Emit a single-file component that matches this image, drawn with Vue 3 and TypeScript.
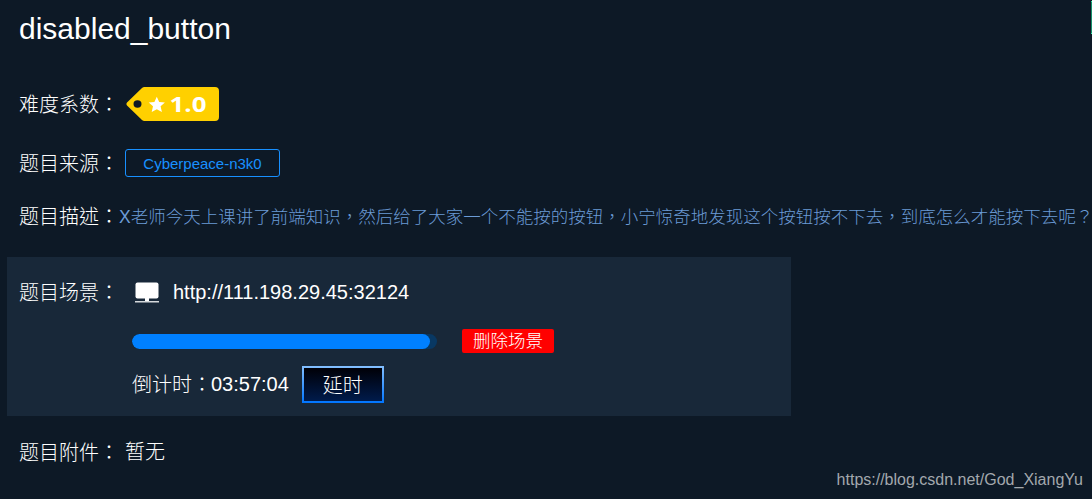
<template>
  <div class="page">
    <div class="side-edge"></div>
    <h1 class="title">disabled_button</h1>

    <div class="row difficulty">
      <span class="label">难度系数：</span>
      <svg class="tag" width="94" height="34" viewBox="0 0 94 34">
        <path fill="#ffd000" fill-rule="evenodd" d="M19.500 0H90Q94 0 94 4V30Q94 34 90 34H19.500Q18 34 17 33L2 18.500Q.6 17 2 15.500L17 1Q18 0 19.500 0ZM12.500 13.300a4 3.700 0 1 0 0 7.400a4 3.700 0 1 0 0-7.400Z" />
        <path fill="#fff" d="M31.800 9.700L34.200 15L39.900 15.600L35.600 19.300L36.900 25.100L31.800 22.200L26.700 25.100L28 19.300L23.700 15.600L29.400 15Z" />
        <text x="44.500" y="24.500" textLength="37" lengthAdjust="spacingAndGlyphs">{{ challenge.difficulty }}</text>
      </svg>
    </div>

    <div class="row source">
      <span class="label">题目来源：</span>
      <span class="source-tag">{{ challenge.source }}</span>
    </div>

    <div class="row description">
      <span class="label">题目描述：</span>
      <span class="description-text">{{ challenge.description }}</span>
    </div>

    <div class="scene">
      <div class="row scene-address">
        <span class="label">题目场景：</span>
        <svg class="monitor" width="24" height="21" viewBox="0 0 24 21">
          <rect x="0.500" y="0.500" width="23" height="16" rx="2" fill="#fff" />
          <path d="M10 16h4v3h-4z" fill="#fff" />
          <path d="M0 19h24v1.500H0z" fill="#d5d9dc" />
        </svg>
        <span class="url">{{ challenge.url }}</span>
      </div>
      <div class="row scene-progress">
        <div class="progress">
          <div class="progress-bar" :style="{ width: progress + '%' }"></div>
        </div>
        <button class="delete">删除场景</button>
      </div>
      <div class="row scene-time">
        <span class="label">倒计时：</span>
        <span class="countdown">{{ countdown }}</span>
        <button class="delay">延时</button>
      </div>
    </div>

    <div class="row attachment">
      <span class="label">题目附件：</span>
      <span class="attachment-value">暂无</span>
    </div>

    <div class="watermark">https://blog.csdn.net/God_XiangYu</div>
  </div>
</template>

<script setup lang="ts">
import { ref, computed } from 'vue';

const challenge = {
  difficulty: '1.0',
  source: 'Cyberpeace-n3k0',
  description: 'X老师今天上课讲了前端知识，然后给了大家一个不能按的按钮，小宁惊奇地发现这个按钮按不下去，到底怎么才能按下去呢？',
  url: 'http://111.198.29.45:32124',
};

const progress = ref(97.7);
const secondsLeft = ref(14224);

const countdown = computed(() => {
  const s = secondsLeft.value;
  return [Math.floor(s / 3600), Math.floor(s / 60) % 60, s % 60]
    .map((n) => String(n).padStart(2, '0'))
    .join(':');
});
</script>

<style>
body {
  margin: 0;
  background: #0d1926;
}
</style>

<style scoped>
.page {
  position: relative;
  width: 1092px;
  height: 499px;
  overflow: hidden;
  box-sizing: border-box;
  background: #0d1926;
  color: #fff;
  font-family: "Liberation Sans", "Noto Sans CJK TC", sans-serif;
  font-size: 20px;
  font-weight: 300;
}

.side-edge {
  position: absolute;
  right: 0;
  top: 1px;
  width: 1px;
  height: 31px;
  background: #168f6b;
  border-top: 1px solid #2ff0ac;
  border-bottom: 1px solid #2ff0ac;
}

.title {
  margin: 0;
  height: 74px;
  padding-left: 19px;
  font-size: 30px;
  font-weight: 400;
  line-height: 57px;
}

.row {
  display: flex;
  align-items: center;
  box-sizing: border-box;
  padding-left: 19px;
  white-space: nowrap;
}

.label {
  flex: none;
  padding-top: 2px;
  line-height: 30px;
}

.difficulty {
  height: 60px;
}

.tag {
  margin-left: 6px;
}

.tag text {
  fill: #fff;
  font-family: "Open Sans", sans-serif;
  font-size: 21px;
  font-weight: 700;
}

.source {
  height: 58px;
}

.source-tag {
  box-sizing: border-box;
  width: 155px;
  height: 28px;
  margin-left: 6px;
  border: 1px solid #1890ff;
  border-radius: 3px;
  color: #1890ff;
  font-size: 15px;
  line-height: 27px;
  text-align: center;
}

.description {
  height: 48px;
}

.description-text {
  padding-bottom: 2px;
  color: #6b9bd6;
  font-size: 17.5px;
}

.scene {
  box-sizing: border-box;
  width: 784px;
  height: 159px;
  margin: 17px 0 0 7px;
  padding-top: 15px;
  background: #182839;
}

.scene .row {
  padding-left: 12px;
}

.scene-address {
  height: 40px;
}

.monitor {
  margin-left: 16px;
}

.url {
  margin-left: 14px;
  font-size: 20px;
}

.scene .scene-progress {
  height: 58px;
  padding-left: 125px;
}

.progress {
  width: 305px;
  height: 15px;
  overflow: hidden;
  border-radius: 8px;
  background: #083863;
}

.progress-bar {
  height: 100%;
  border-radius: 8px;
  background: #0080ff;
}

button {
  box-sizing: border-box;
  padding: 0;
  color: #fff;
  font-family: inherit;
  font-weight: inherit;
}

.delete {
  width: 92px;
  height: 24px;
  margin-left: 25px;
  border: 0;
  border-radius: 2px;
  background: #f00;
  font-size: 17.5px;
  line-height: 22px;
}

.scene .scene-time {
  height: 28px;
  padding-left: 125px;
}

.countdown {
  margin-left: -1px;
  padding-top: 1px;
  font-size: 20px;
}

.delay {
  width: 82px;
  height: 37px;
  margin-left: 13px;
  border: 2px solid;
  border-image: linear-gradient(#83bfff, #0075ff) 2;
  background: linear-gradient(#000007, #001b4b);
  font-size: 20px;
}

.attachment {
  height: 72px;
}

.attachment-value {
  margin: 0 0 4px 6px;
}

.watermark {
  position: absolute;
  right: 9px;
  bottom: 9px;
  color: #a3a8ad;
  font-size: 16px;
  line-height: 20px;
}
</style>
